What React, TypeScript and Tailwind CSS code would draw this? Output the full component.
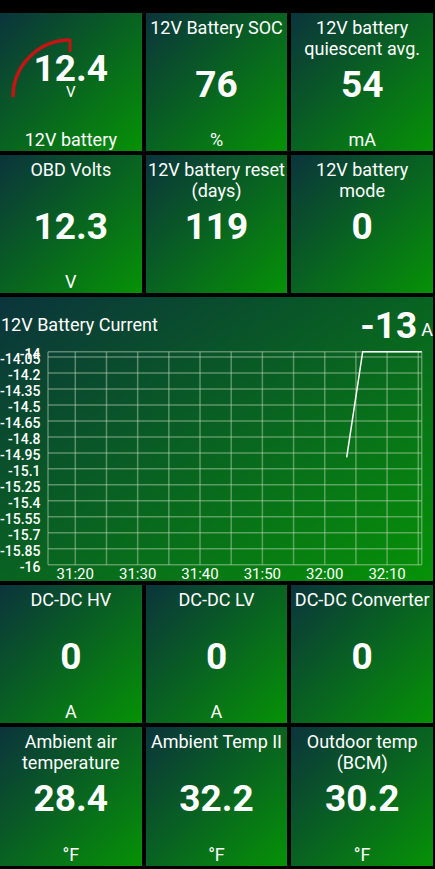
import React from 'react';

const tileBg = 'bg-linear-to-br/srgb from-[#0b343c] to-[#069206]';

interface TileProps {
  title: string[];
  value: string;
  unit: string;
}

const Tile: React.FC<TileProps> = ({ title, value, unit }) => (
  <div className={`${tileBg} grid grid-rows-[1fr_auto_1fr] text-center text-white`}>
    <div className="self-start pt-[4px] text-[18px] leading-[21px] whitespace-nowrap">
      {title.map(line => (
        <div key={line}>{line}</div>
      ))}
    </div>
    <div className="pt-[4px] text-[37px] leading-[37px] font-bold">{value}</div>
    <div className="self-end pb-[1px] text-[18px] leading-[21px]">{unit}</div>
  </div>
);

const GaugeTile: React.FC = () => (
  <div className={`${tileBg} relative flex flex-col items-center text-white`}>
    <svg className="absolute left-0 top-0" width={142} height={138} viewBox="0 0 142 138">
      <path d="M13 84 A57 57 0 0 1 70 27" fill="none" stroke="#c41414" strokeWidth={3.5} />
      <line x1={70} y1={26} x2={70} y2={39} stroke="#c41414" strokeWidth={3} />
    </svg>
    <div className="relative pt-[37px] text-[37px] leading-[37px] font-bold">12.4</div>
    <div className="relative mt-[-2px] text-[15px] leading-[15px]">V</div>
    <div className="mt-auto pb-[1px] text-[18px] leading-[21px]">12V battery</div>
  </div>
);

const yTicks = ['-14', '-14.05', '-14.2', '-14.35', '-14.5', '-14.65', '-14.8', '-14.95', '-15.1', '-15.25', '-15.4', '-15.55', '-15.7', '-15.85', '-16'];
const xLabels = ['31:20', '31:30', '31:40', '31:50', '32:00', '32:10'];

const TOP = 4.7;
const BOTTOM = 217.7;
const LEFT = 48;
const RIGHT = 421.7;
const yFor = (v: number) => TOP + (-14 - v) * ((BOTTOM - TOP) / 2);

const ChartTile: React.FC = () => {
  const vLines = Array.from({ length: 12 }, (_, k) => 75.3 + k * 31.18);
  return (
    <div className={`${tileBg} h-[284px] flex flex-col text-white`}>
      <div className="h-[50px] flex items-start pl-[1px]">
        <span className="pt-[17px] text-[18px] leading-[21px]">12V Battery Current</span>
        <span className="ml-auto pt-[10px] text-[37px] leading-[37px] font-bold">-13</span>
        <span className="pt-[22px] pl-[4px] text-[18px] leading-[21px]">A</span>
      </div>
      <svg width={433} height={234} viewBox="0 0 433 234" className="block">
        <g stroke="#c4d6bc" strokeOpacity={0.45} strokeWidth={1.5}>
          {yTicks.map(t => (
            <line key={t} x1={LEFT} x2={RIGHT} y1={yFor(parseFloat(t))} y2={yFor(parseFloat(t))} />
          ))}
          {vLines.map(x => (
            <line key={x} x1={x} x2={x} y1={TOP} y2={BOTTOM} />
          ))}
          <line x1={LEFT} x2={LEFT} y1={TOP} y2={BOTTOM} />
          <line x1={RIGHT} x2={RIGHT} y1={TOP} y2={BOTTOM} />
        </g>
        <polyline
          points={`346.7,110.3 362.7,${TOP} ${RIGHT},${TOP}`}
          fill="none"
          stroke="#ffffff"
          strokeWidth={1.5}
        />
        <g fill="#ffffff" fontFamily="Roboto, sans-serif" fontSize={14} fontWeight={500}>
          {yTicks.map(t => (
            <text key={t} x={40.5} y={yFor(parseFloat(t)) + 7} textAnchor="end">
              {t}
            </text>
          ))}
        </g>
        <g fill="#ffffff" fontFamily="Roboto, sans-serif" fontSize={15}>
          {xLabels.map((l, i) => (
            <text key={l} x={vLines[i * 2]} y={231.5} textAnchor="middle">
              {l}
            </text>
          ))}
        </g>
      </svg>
    </div>
  );
};

export default function App() {
  return (
    <div className="w-[435px] h-[869px] bg-black pt-[13px] pr-[2px] flex flex-col gap-[4px] font-['Roboto',sans-serif]">
      <div className="grid grid-cols-3 gap-x-[4px] h-[138px]">
        <GaugeTile />
        <Tile title={['12V Battery SOC']} value="76" unit="%" />
        <Tile title={['12V battery', 'quiescent avg.']} value="54" unit="mA" />
      </div>
      <div className="grid grid-cols-3 gap-x-[4px] h-[138px]">
        <Tile title={['OBD Volts']} value="12.3" unit="V" />
        <Tile title={['12V battery reset', '(days)']} value="119" unit="" />
        <Tile title={['12V battery', 'mode']} value="0" unit="" />
      </div>
      <ChartTile />
      <div className="grid grid-cols-3 gap-x-[4px] h-[138px]">
        <Tile title={['DC-DC HV']} value="0" unit="A" />
        <Tile title={['DC-DC LV']} value="0" unit="A" />
        <Tile title={['DC-DC Converter']} value="0" unit="" />
      </div>
      <div className="grid grid-cols-3 gap-x-[4px] h-[139px]">
        <Tile title={['Ambient air', 'temperature']} value="28.4" unit="°F" />
        <Tile title={['Ambient Temp II']} value="32.2" unit="°F" />
        <Tile title={['Outdoor temp', '(BCM)']} value="30.2" unit="°F" />
      </div>
    </div>
  );
}
